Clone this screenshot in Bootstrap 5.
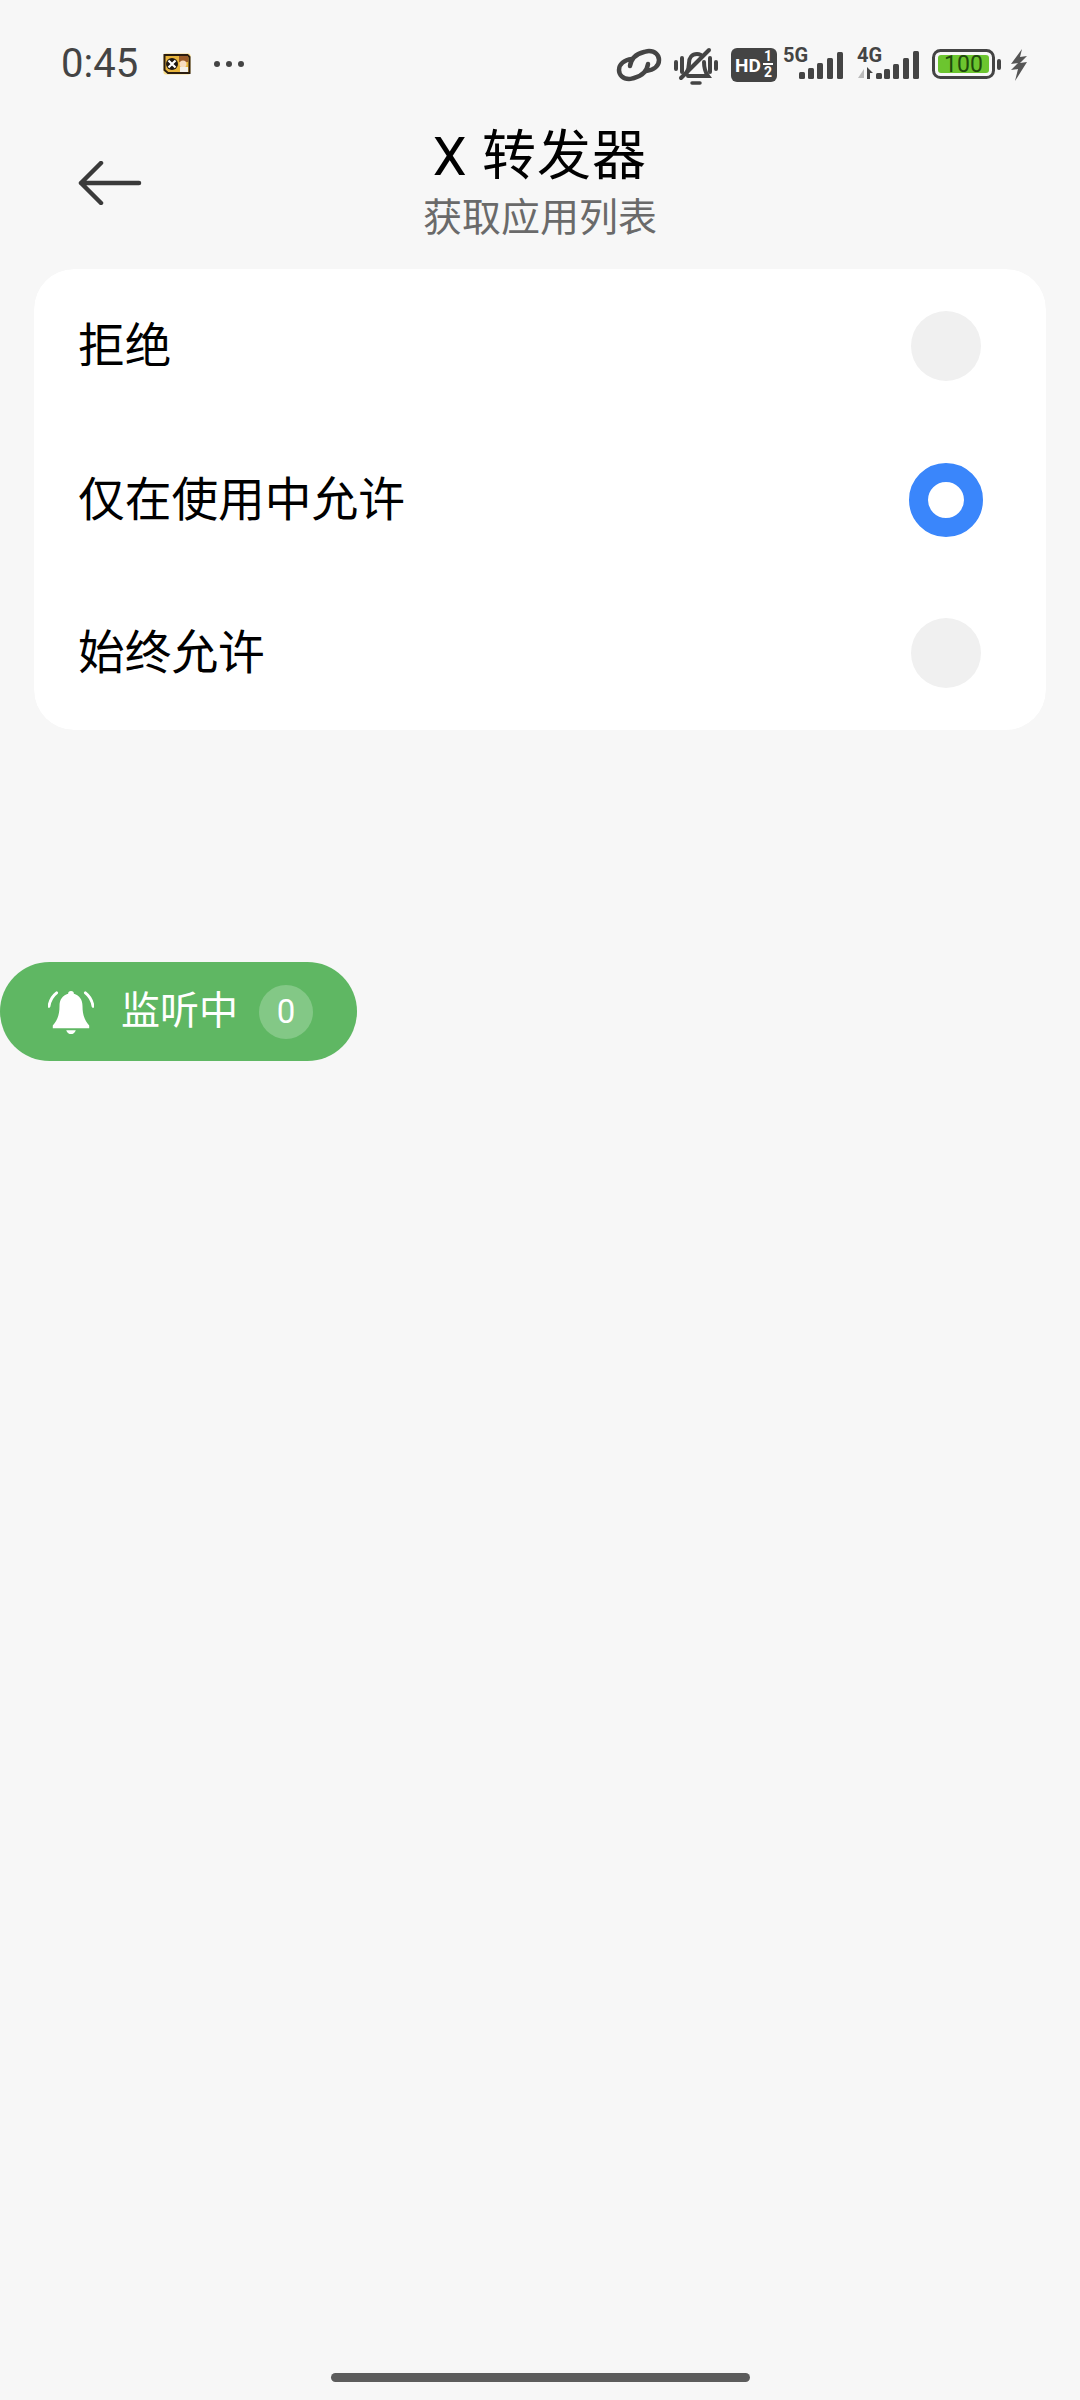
<!DOCTYPE html>
<html lang="zh-CN">
<head>
    <meta charset="UTF-8">
    <meta name="viewport" content="width=device-width, initial-scale=1.0">
    <title>X 转发器</title>
    <link href="https://cdn.jsdelivr.net/npm/bootstrap@5.3.0/dist/css/bootstrap.min.css" rel="stylesheet">
    <style>
        body {
            background: #f7f7f7;
            font-family: Roboto, "Noto Sans CJK SC", sans-serif;
            width: 1080px;
            height: 2400px;
            overflow: hidden;
        }
        .screen { height: 2400px; position: relative; }
        .status-row { height: 96px; padding: 45px 0 0 61px; color: #444; }
        .clock { font-size: 40px; width: 102px; line-height: 38px; }
        .dots-icon { margin-left: 22px; }
        .status-right { margin-left: 371px; }
        .status-right svg { display: block; overflow: visible; }
        .ic-link { margin-top: 2px; }
        .ic-bell { margin-top: 2px; margin-left: 12px; }
        .ic-hd { margin-top: 3px; margin-left: 13px; }
        .ic-five { margin-top: 1px; margin-left: 6px; }
        .ic-four { margin-top: 1px; margin-left: 14px; }
        .ic-batt { margin-top: 4px; margin-left: 13px; }
        .ic-bolt { margin-top: 4px; margin-left: 7px; }
        .page-head {
            display: grid;
            grid-template-columns: 1fr auto 1fr;
            align-items: center;
            height: 173px;
        }
        .back-btn { padding: 0 0 0 78px; border: 0; background: none; line-height: 0; text-align: left; }
        .page-title { font-size: 54px; line-height: 68px; color: #000; text-align: center; letter-spacing: 1px; }
        .page-sub { font-size: 39px; line-height: 50px; margin-top: 2px; color: #6a6a6a; text-align: center; }
        .perm-card { margin: 0 34px; border-radius: 40px; border: 0; overflow: hidden; }
        .perm-item {
            height: 153.7px;
            border: 0;
            padding: 0 63px 0 44px;
            font-size: 46.7px;
            color: #000;
        }
        .radio-off { width: 70px; height: 70px; border-radius: 50%; background: #f0f0f0; margin-right: 2px; }
        .radio-on { width: 74px; height: 74px; border-radius: 50%; border: 19px solid #3a86fb; background: #fff; }
        .listen-pill {
            position: absolute;
            left: 0;
            top: 962px;
            width: 357px;
            height: 99px;
            border-radius: 50px;
            background: #5fb763;
            color: #fff;
            padding-left: 48px;
        }
        .listen-text { font-size: 39px; margin-left: 27px; }
        .listen-count {
            width: 54px;
            height: 54px;
            border-radius: 50%;
            background: #83c886;
            font-size: 33px;
            margin-left: 21px;
        }
        .home-bar {
            position: absolute;
            left: 331px;
            top: 2373px;
            width: 419px;
            height: 9px;
            border-radius: 5px;
            background: #5c5c5c;
        }
    </style>
</head>
<body>
<div class="screen">
    <div class="status-row d-flex align-items-start">
        <div class="d-flex align-items-center">
            <span class="clock">0:45</span>
            <svg width="28" height="22" viewBox="0 0 28 22">
                <rect x="0.5" y="0.5" width="27" height="21" rx="2" fill="#fbe08a"/>
                <path d="M1.5 2h23l2 2v16H5l-3.5-3z" fill="#e9b53c" stroke="#2b1d10" stroke-width="2"/>
                <circle cx="9" cy="11" r="6" fill="#1e1712"/>
                <path d="M5.5 7.5l7 7M12.5 7.5l-7 7" stroke="#fff" stroke-width="2.2"/>
                <path d="M16 3h9v6h-9z" fill="#9a5a28"/>
                <circle cx="20" cy="11" r="3.5" fill="#f7dcc0"/>
                <path d="M17 14h8v5h-8z" fill="#f4f0e8"/>
            </svg>
            <svg class="dots-icon" width="32" height="8" viewBox="0 0 32 8" fill="#444">
                <circle cx="4" cy="4" r="3"/><circle cx="16" cy="4" r="3"/><circle cx="28" cy="4" r="3"/>
            </svg>
        </div>
        <div class="status-right d-flex align-items-start">
            <!-- link -->
            <svg class="ic-link" width="46" height="36" viewBox="0 0 46 36" fill="none" stroke="#444" stroke-width="4.5" stroke-linecap="round">
                <path d="M14 19C15 12 20 7 28 5c2-.5 3-1 5-1 6 0 10 4 10 9 0 6-5 10-13 11"/>
                <path d="M32 17c-1 7-6 12-14 14-2 .5-3 1-5 1-6 0-10-4-10-9 0-6 5-10 13-11"/>
            </svg>
            <!-- muted bell -->
            <svg class="ic-bell" width="44" height="40" viewBox="0 0 44 40" fill="none" stroke="#444" stroke-width="4" stroke-linecap="round">
                <path d="M2 15v7M8 11v14M36 11v14M42 15v7"/>
                <path d="M12 27c2-3 3-7 3-11 0-5 3-9 8-9 2 0 3 .5 4 1"/>
                <path d="M30 15c0 6 1 10 4 14H14"/>
                <path d="M7 31L35 3"/>
                <path d="M18 36h8" stroke-width="3.5"/>
            </svg>
            <!-- HD -->
            <svg class="ic-hd" width="46" height="34" viewBox="0 0 46 34">
                <rect width="46" height="34" rx="6" fill="#444"/>
                <text x="4" y="24" font-family="Roboto" font-weight="700" font-size="19" fill="#fff">HD</text>
                <text x="37" y="13" text-anchor="middle" font-family="Roboto" font-weight="700" font-size="14" fill="#fff">1</text>
                <rect x="32" y="15" width="10" height="2" fill="#fff"/>
                <text x="37" y="29" text-anchor="middle" font-family="Roboto" font-weight="700" font-size="14" fill="#fff">2</text>
            </svg>
            <!-- 5G signal -->
            <svg class="ic-five" width="60" height="35" viewBox="0 0 60 35" fill="#444">
                <text x="0" y="16" font-family="Roboto" font-weight="700" font-size="20">5G</text>
                <rect x="16" y="26" width="6" height="7" rx="1.5"/>
                <rect x="25" y="22" width="6" height="11" rx="1.5"/>
                <rect x="34" y="17" width="6" height="16" rx="1.5"/>
                <rect x="44" y="12" width="6" height="21" rx="1.5"/>
                <rect x="54" y="6" width="6" height="27" rx="1.5"/>
            </svg>
            <!-- 4G signal -->
            <svg class="ic-four" width="62" height="35" viewBox="0 0 62 35" fill="#444">
                <text x="0" y="16" font-family="Roboto" font-weight="700" font-size="20">4G</text>
                <path d="M7 23v9H1z" fill="#bbb"/>
                <path d="M10 21l6 6h-3v6h-3z"/>
                <rect x="19" y="27" width="6" height="6" rx="1.5"/>
                <rect x="27" y="23" width="6" height="10" rx="1.5"/>
                <rect x="36" y="18" width="6" height="15" rx="1.5"/>
                <rect x="46" y="12" width="6" height="21" rx="1.5"/>
                <rect x="56" y="5" width="6" height="28" rx="1.5"/>
            </svg>
            <!-- battery -->
            <svg class="ic-batt" width="70" height="30" viewBox="0 0 70 30">
                <rect x="1.5" y="1.5" width="60" height="27" rx="7" fill="none" stroke="#444" stroke-width="3"/>
                <rect x="6" y="6" width="51" height="18" rx="3" fill="#6cc52f"/>
                <text x="31.5" y="23" text-anchor="middle" font-family="Roboto" font-size="23" fill="#1f4a0c">100</text>
                <rect x="65" y="10" width="4" height="11" rx="2" fill="#444"/>
            </svg>
            <!-- bolt -->
            <svg class="ic-bolt" width="20" height="32" viewBox="0 0 18 32" fill="#555">
                <path d="M12 0L1 15l7-1-7 7 7-1-3 12L17 13l-7 1 7-7-7 1z"/>
            </svg>
        </div>
    </div>

    <div class="page-head">
        <button class="back-btn" type="button" aria-label="返回">
            <svg width="64" height="44" viewBox="0 0 64 44" fill="none" stroke="#3a3a3a" stroke-width="4.5" stroke-linecap="round" stroke-linejoin="round">
                <path d="M3 22h58M23 2L3 22l20 20"/>
            </svg>
        </button>
        <div>
            <div class="page-title">X 转发器</div>
            <div class="page-sub">获取应用列表</div>
        </div>
        <div></div>
    </div>

    <div class="list-group perm-card">
        <div class="list-group-item perm-item d-flex align-items-center justify-content-between">
            <span>拒绝</span><span class="radio-off"></span>
        </div>
        <div class="list-group-item perm-item d-flex align-items-center justify-content-between">
            <span>仅在使用中允许</span><span class="radio-on"></span>
        </div>
        <div class="list-group-item perm-item d-flex align-items-center justify-content-between">
            <span>始终允许</span><span class="radio-off"></span>
        </div>
    </div>

    <div class="listen-pill d-flex align-items-center">
        <svg width="46" height="46" viewBox="0 0 48 46" fill="#fff">
            <path d="M24 1a3 3 0 0 1 3 3c6 2 9 6 9 13 0 8 2 15 7 20v3H5v-3c5-5 7-12 7-20 0-7 3-11 9-13a3 3 0 0 1 3-3z"/>
            <path d="M19 42h10c-1 3-3 4-5 4s-4-1-5-4z"/>
            <path d="M1 17C2 11 5 6 9 3M47 17C46 11 43 6 39 3" fill="none" stroke="#fff" stroke-width="3" stroke-linecap="round"/>
        </svg>
        <span class="listen-text">监听中</span>
        <span class="listen-count d-flex align-items-center justify-content-center">0</span>
    </div>

    <div class="home-bar"></div>
</div>
<script src="https://cdn.jsdelivr.net/npm/bootstrap@5.3.0/dist/js/bootstrap.bundle.min.js"></script>
</body>
</html>
